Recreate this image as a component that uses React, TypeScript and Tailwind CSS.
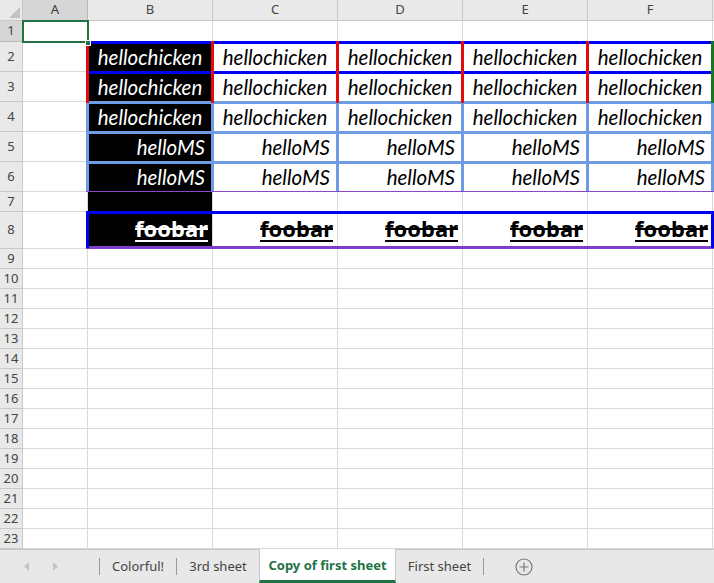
import React from 'react';

const COLS = ['A', 'B', 'C', 'D', 'E', 'F'];
const ROWS = Array.from({ length: 23 }, (_, i) => i + 1);

// border lines drawn over the grid, like Excel paints cell borders
const BORDERS = [
  // rows 2-3: blue horizontals, red verticals, green right edge
  'left-[86px] top-[41px] w-[628px] h-[3px] bg-[#0000f0]',
  'left-[86px] top-[71px] w-[628px] h-[3px] bg-[#0000f0]',
  // rows 3-6: cornflower grid
  'left-[86px] top-[101px] w-[628px] h-[3px] bg-[#6d9be6]',
  'left-[86px] top-[131px] w-[628px] h-[3px] bg-[#6d9be6]',
  'left-[86px] top-[161px] w-[628px] h-[3px] bg-[#6d9be6]',
  'left-[86px] top-[191px] w-[628px] h-[1px] bg-[#8a47cc]',
  'left-[86px] top-[103px] w-[3px] h-[88px] bg-[#6d9be6]',
  'left-[211px] top-[103px] w-[3px] h-[88px] bg-[#6d9be6]',
  'left-[336px] top-[103px] w-[3px] h-[88px] bg-[#6d9be6]',
  'left-[461px] top-[103px] w-[3px] h-[88px] bg-[#6d9be6]',
  'left-[586px] top-[103px] w-[3px] h-[88px] bg-[#6d9be6]',
  'left-[711px] top-[103px] w-[3px] h-[88px] bg-[#6d9be6]',
  'left-[86px] top-[41px] w-[3px] h-[62px] bg-[#e00d0d]',
  'left-[211px] top-[41px] w-[3px] h-[62px] bg-[#e00d0d]',
  'left-[336px] top-[41px] w-[3px] h-[62px] bg-[#e00d0d]',
  'left-[461px] top-[41px] w-[3px] h-[62px] bg-[#e00d0d]',
  'left-[586px] top-[41px] w-[3px] h-[62px] bg-[#e00d0d]',
  'left-[711px] top-[41px] w-[3px] h-[62px] bg-[#157a1c]',
  // row 8 box
  'left-[86px] top-[211px] w-[628px] h-[3px] bg-[#0000f0]',
  'left-[86px] top-[246px] w-[628px] h-[3px] bg-[#7f3ccc]',
  'left-[86px] top-[211px] w-[3px] h-[37px] bg-[#0000f0]',
  'left-[711px] top-[211px] w-[3px] h-[37px] bg-[#0000f0]',
];

function CellText({ row, col }: { row: number; col: string }) {
  if (col === 'A') return null;
  if (row >= 2 && row <= 4) {
    return (
      <div className="h-full flex items-end justify-center pb-[4px] leading-none text-[20.5px] italic font-['Lato',sans-serif]">
        hellochicken
      </div>
    );
  }
  if (row === 5 || row === 6) {
    return (
      <div className="h-full flex items-end justify-end pr-[7px] pb-[4px] leading-none text-[20.5px] italic font-['Lato',sans-serif]">
        helloMS
      </div>
    );
  }
  if (row === 8) {
    return (
      <div className="h-full flex items-end justify-end pr-[4px] pb-[9px] leading-none text-[22px] font-bold font-['Noto_Sans',sans-serif]">
        <span className="[text-decoration-line:underline_line-through] decoration-[1.5px] underline-offset-[3px]">foobar</span>
      </div>
    );
  }
  return null;
}

function TabBar() {
  return (
    <div className="h-[34px] flex items-stretch bg-[#e8e8e8] border-t border-[#c6c6c6] font-['Noto_Sans',sans-serif] text-[13px] text-[#444]">
      <div className="w-[99px] flex items-center pl-[24px] gap-[22px] text-[#c4c4c4]">
        <svg width="6" height="9" viewBox="0 0 6 9"><path d="M5 0 L0 4.5 L5 9 Z" fill="currentColor" /></svg>
        <svg width="6" height="9" viewBox="0 0 6 9"><path d="M1 0 L6 4.5 L1 9 Z" fill="currentColor" /></svg>
      </div>
      <div className="w-px my-[8px] bg-[#9a9a9a]" />
      <div className="w-[76px] flex items-center justify-center">Colorful!</div>
      <div className="w-px my-[8px] bg-[#9a9a9a]" />
      <div className="w-[82px] flex items-center justify-center">3rd sheet</div>
      <div className="w-[137px] -mt-px pt-[2px] flex items-center justify-center bg-white border-x border-[#c6c6c6] border-b-[3px] border-b-[#217346] font-bold text-[#217346]">
        Copy of first sheet
      </div>
      <div className="w-[87px] flex items-center justify-center">First sheet</div>
      <div className="w-px my-[8px] bg-[#9a9a9a]" />
      <div className="w-[80px] flex items-center justify-center text-[#777]">
        <svg width="18" height="18" viewBox="0 0 18 18" fill="none" stroke="currentColor" strokeWidth="1.2">
          <circle cx="9" cy="9" r="8" />
          <path d="M9 4.5 V13.5 M4.5 9 H13.5" />
        </svg>
      </div>
      <div className="flex-1" />
    </div>
  );
}

export default function App() {
  return (
    <div className="w-[714px] h-[583px] overflow-hidden bg-white flex flex-col select-none">
      <div className="relative">
        <div className="grid grid-cols-[23px_65px_125px_125px_125px_125px_125px_1fr] grid-rows-[21px_21px_30px_30px_30px_30px_30px_20px_37px_repeat(15,20px)]">
          {/* corner */}
          <div className="relative bg-[#e9e9e9] border-r border-b border-[#c8c8c8]">
            <svg className="absolute right-[2px] bottom-[2px]" width="11" height="11" viewBox="0 0 11 11">
              <path d="M11 0 L11 11 L0 11 Z" fill="#c2c2c2" />
            </svg>
          </div>
          {COLS.map((c) => (
            <div
              key={c}
              className={`flex items-center justify-center border-r border-b font-['Noto_Sans',sans-serif] text-[13px] ${
                c === 'A' ? 'bg-[#d6d6d6] border-[#b8b8b8] text-[#3a3a3a]' : 'bg-[#e9e9e9] border-[#c8c8c8] text-[#444]'
              }`}
            >
              {c}
            </div>
          ))}
          <div className="bg-[#e9e9e9] border-b border-[#c8c8c8]" />

          {ROWS.map((r) => (
            <React.Fragment key={r}>
              <div
                className={`flex items-center justify-center border-r border-b font-['Noto_Sans',sans-serif] text-[13px] text-[#444] ${
                  r === 1 ? 'bg-[#d6d6d6] border-[#b8b8b8]' : 'bg-[#e9e9e9] border-[#c8c8c8]'
                }`}
              >
                {r}
              </div>
              {COLS.map((c) => (
                <div
                  key={c}
                  className={`border-r border-b border-[#d9d9d9] ${
                    c === 'B' && r >= 2 && r <= 8 ? 'bg-black text-white' : 'bg-white text-black'
                  }`}
                >
                  <CellText row={r} col={c} />
                </div>
              ))}
              <div className="border-b border-[#d9d9d9]" />
            </React.Fragment>
          ))}
        </div>

        {BORDERS.map((b, i) => (
          <div key={i} className={`absolute ${b}`} />
        ))}

        {/* active cell A1 */}
        <div className="absolute left-[22px] top-[20px] w-[67px] h-[23px] border-2 border-[#217346]" />
        <div className="absolute left-[85px] top-[40px] w-[6px] h-[6px] bg-[#217346] border border-white" />
      </div>
      <TabBar />
    </div>
  );
}
